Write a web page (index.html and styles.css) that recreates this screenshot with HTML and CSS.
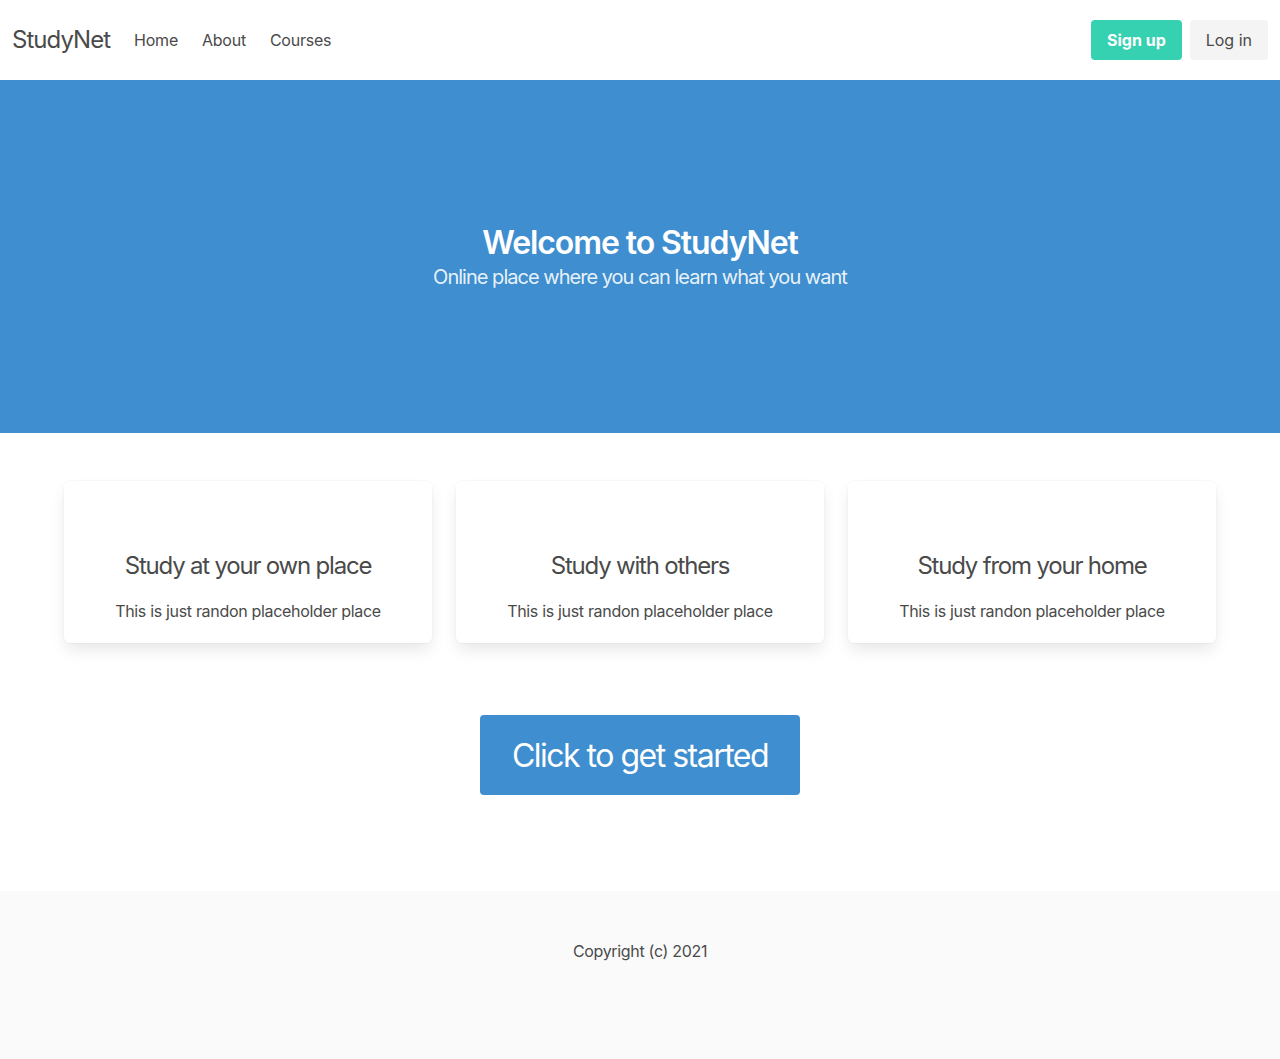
FILE: index.html
```html
<!DOCTYPE html>
<html lang="en">
<head>
<meta charset="utf-8">
<title>StudyNet</title>
<link rel="stylesheet" href="styles.css">
</head>
<body>
<nav class="navbar">
  <div class="navbar-start">
    <a class="navbar-item brand" href="#">StudyNet</a>
    <a class="navbar-item" href="#">Home</a>
    <a class="navbar-item" href="#">About</a>
    <a class="navbar-item" href="#">Courses</a>
  </div>
  <div class="navbar-end">
    <a class="button is-primary" href="#">Sign up</a>
    <a class="button is-light" href="#">Log in</a>
  </div>
</nav>

<section class="hero">
  <h1 class="hero-title">Welcome to StudyNet</h1>
  <p class="hero-subtitle">Online place where you can learn what you want</p>
</section>

<section class="features">
  <div class="columns">
    <div class="card">
      <h3 class="card-title">Study at your own place</h3>
      <p class="card-text">This is just randon placeholder place</p>
    </div>
    <div class="card">
      <h3 class="card-title">Study with others</h3>
      <p class="card-text">This is just randon placeholder place</p>
    </div>
    <div class="card">
      <h3 class="card-title">Study from your home</h3>
      <p class="card-text">This is just randon placeholder place</p>
    </div>
  </div>
  <div class="cta-row">
    <a class="button is-info is-large" href="#">Click to get started</a>
  </div>
</section>

<footer class="footer">
  <p>Copyright (c) 2021</p>
</footer>
</body>
</html>
```

FILE: styles.css
```css
* { box-sizing: border-box; }
html, body { margin: 0; padding: 0; }
body {
  font-family: Inter, "Noto Sans", "Liberation Sans", sans-serif;
  font-size: 16px;
  line-height: 1.5;
  color: #4a4a4a;
  background: #fff;
}
a { text-decoration: none; }

.navbar {
  height: 80px;
  display: flex;
  align-items: center;
  justify-content: space-between;
  padding: 0 12px 0 0;
  background: #fff;
}
.navbar-start { display: flex; align-items: center; }
.navbar-item {
  color: #4a4a4a;
  padding: 8px 12px;
  font-size: 16px;
  letter-spacing: -0.015em;
}
.navbar-item.brand { font-size: 24px; line-height: 1.25; letter-spacing: -0.04em; }
.navbar-end { display: flex; gap: 8px; }

.button {
  display: inline-flex;
  align-items: center;
  justify-content: center;
  height: 40px;
  padding: 0 15px;
  border: 1px solid transparent;
  border-radius: 4px;
  font-size: 16px;
  line-height: 1.5;
}
.button.is-primary { background: #35d1b1; color: #fff; font-weight: 700; }
.button.is-light { background: #f4f4f4; color: #4a4a4a; }
.button.is-info { background: #3e8ed0; color: #fff; }
.button.is-large {
  font-size: 32px;
  height: 80px;
  padding: 2px 31px 0;
  letter-spacing: -0.047em;
}

.hero {
  background: #3e8ed0;
  padding: 145px 24px 143px;
  text-align: center;
}
.hero-title {
  margin: 0;
  color: #fff;
  font-size: 32px;
  font-weight: 600;
  line-height: 1.125;
  letter-spacing: -0.034em;
}
.hero-subtitle {
  margin: 4px 0 0;
  color: rgba(255,255,255,0.9);
  font-size: 20px;
  line-height: 1.25;
  letter-spacing: -0.049em;
}

.features { padding: 48px 64px 96px; }
.columns {
  display: grid;
  grid-template-columns: repeat(3, 1fr);
  gap: 24px;
}
.card {
  background: #fff;
  border-radius: 6px;
  box-shadow: 0 8px 16px -2px rgba(10,10,10,0.1), 0 0 0 1px rgba(10,10,10,0.02);
  padding: 70px 24px 20px;
  text-align: center;
}
.card-title {
  margin: 0;
  font-size: 24px;
  font-weight: 400;
  line-height: 30px;
  color: #4a4a4a;
  letter-spacing: -0.05em;
}
.card-text { margin: 18px 0 0; line-height: 24px; letter-spacing: -0.02em; }

.cta-row {
  display: flex;
  justify-content: center;
  margin-top: 72px;
}

.footer {
  background: #fafafa;
  padding: 48px 24px 96px;
  text-align: center;
}
.footer p { margin: 0; letter-spacing: -0.02em; }
```
